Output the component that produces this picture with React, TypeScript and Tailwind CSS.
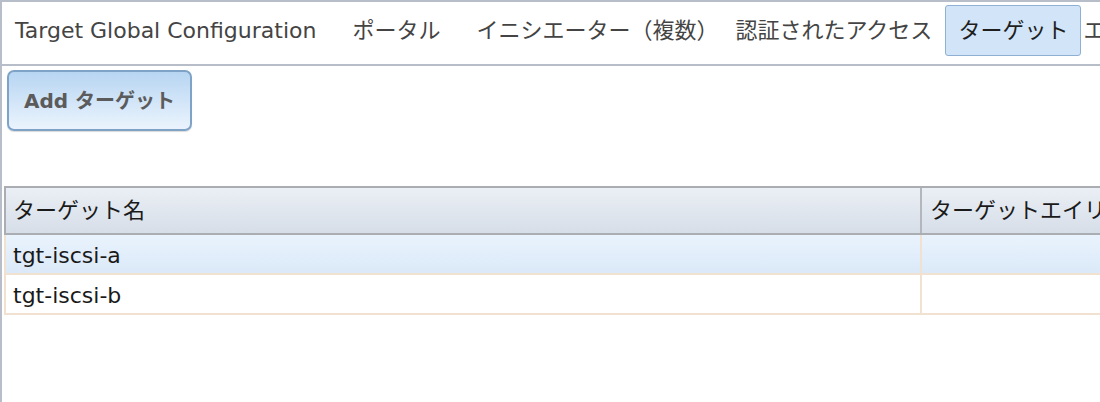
export default function App() {
  const tabs = [
    { label: "Target Global Configuration", cls: "" },
    { label: "ポータル", cls: "ml-[2px]" },
    { label: "イニシエーター（複数）", cls: "ml-[2px] mr-[-17px]" },
    { label: "認証されたアクセス", cls: "mr-[-8px]" },
    { label: "ターゲット", cls: "mr-[-19px]" },
    { label: "エクステント", cls: "" },
  ];
  const selected = "ターゲット";

  return (
    <div className="h-screen w-[1100px] overflow-hidden bg-white border-l-2 border-[#b7bec9] font-['DejaVu_Sans','Noto_Sans_CJK_JP',sans-serif]">
      {/* tab bar */}
      <div className="flex items-start gap-[8px] h-[66px] border-y-2 border-[#b7bec9] pt-[3px] whitespace-nowrap text-[22px]">
        {tabs.map((t) => (
          <div
            key={t.label}
            className={
              t.label === selected
                ? "flex items-center h-[51px] px-3 border border-[#8fb0d2] rounded-[3px] bg-[#d2e5f8] text-[#1e1e1e] " + t.cls
                : "flex items-center h-[51px] px-3 border border-transparent text-[#444] " + t.cls
            }
          >
            {t.label}
          </div>
        ))}
      </div>

      {/* content */}
      <div className="pt-[4px]">
        <button className="ml-[5px] w-[185px] h-[61px] border-2 border-[#7fa3c7] rounded-[7px] bg-linear-to-b from-[#b7d5f2] to-[#ebf4fd] shadow-[0_1px_1px_rgba(0,0,0,0.15)] text-[20px] font-bold text-[#5b5b5b] whitespace-nowrap">
          Add ターゲット
        </button>

        <div className="mt-[55px] ml-[2px] w-[1200px] text-[22px] text-[#1a1a1a] whitespace-nowrap">
          <div className="flex h-[49px] border-y-2 border-l-2 border-[#aaadb1] bg-linear-to-b from-[#ebeff5] to-[#d6dee8]">
            <div className="flex items-center w-[916px] px-[7px] border-r-2 border-[#b3b6ba]">
              ターゲット名
            </div>
            <div className="flex items-center px-[8px]">ターゲットエイリアス</div>
          </div>

          {["tgt-iscsi-a", "tgt-iscsi-b"].map((name, i) => (
            <div
              key={name}
              className={
                i === 0
                  ? "flex h-[40px] border-b-2 border-l-2 border-[#f0e1d1] bg-linear-to-b from-[#e9f3fd] to-[#dbe9f8]"
                  : "flex h-[40px] border-b-2 border-l-2 border-[#f0e1d1] bg-white"
              }
            >
              <div className="flex items-center w-[916px] px-[7px] pt-[2px] border-r-2 border-[#f0e1d1]">
                {name}
              </div>
              <div className="px-[8px]"></div>
            </div>
          ))}
        </div>
      </div>
    </div>
  );
}
